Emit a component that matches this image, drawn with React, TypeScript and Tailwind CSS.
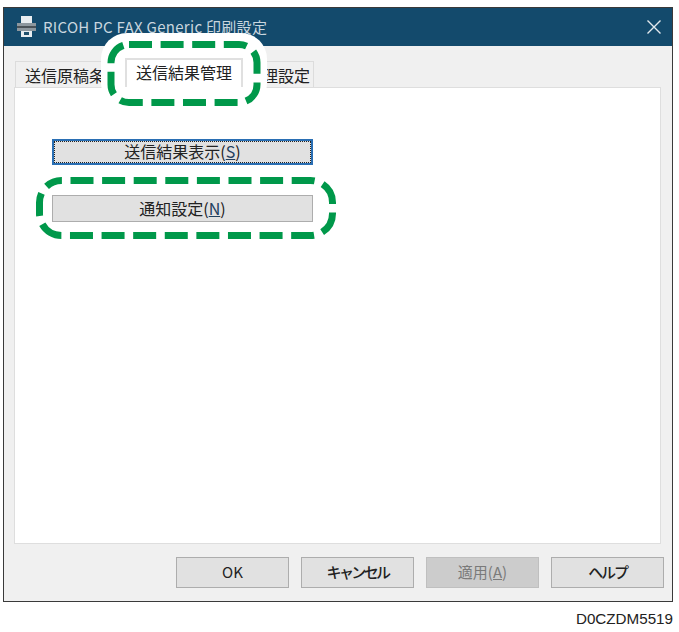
export default function App() {
  const font = { fontFamily: '"Noto Sans CJK JP", "Liberation Sans", sans-serif' };
  return (
    <div className="relative w-[679px] h-[632px] bg-white overflow-hidden" style={font}>
      <div className="ml-[3px] pt-[7px] w-[670px]">
        <div className="h-[595px] border border-[#3a3a3a] bg-[#f0f0f0] flex flex-col">
          <div className="h-[38px] bg-[#134a6c] flex items-center pl-[11px] pr-[10px] text-[#c9d6df] text-[15px]">
            <svg width="22" height="22" viewBox="0 0 22 22" className="mr-[6px]">
              <rect x="6" y="0" width="11" height="7" fill="#e8edf0" />
              <rect x="2" y="7" width="19" height="8" fill="#8d979e" />
              <rect x="2" y="10" width="19" height="2" fill="#4a5258" />
              <rect x="6" y="15" width="11" height="6" fill="#e8edf0" />
              <rect x="9" y="16" width="5" height="3" fill="#20506c" />
            </svg>
            <span className="tracking-[0.3px]">RICOH PC FAX Generic 印刷設定</span>
            <svg width="16" height="16" viewBox="0 0 16 16" className="ml-auto">
              <path d="M1.5 1.5l13 13M14.5 1.5l-13 13" stroke="#e3e9ed" strokeWidth="1.4" fill="none" />
            </svg>
          </div>
          <div className="flex-1 pl-[10px] pr-[11px] flex flex-col">
            <div className="flex items-end h-[41px] pl-px text-[16px] text-[#222]">
              <div className="w-[110px] h-[26px] bg-[#f0f0f0] border border-b-0 border-[#dcdcdc] pl-[9px] leading-[26px] whitespace-nowrap overflow-hidden">送信原稿条件</div>
              <div className="w-[118px] h-[29px] bg-white border-2 border-b-0 border-[#e0e0e0] text-center leading-[24px] relative z-10">送信結果管理</div>
              <div className="w-[72px] h-[26px] -ml-px bg-[#f0f0f0] border border-b-0 border-[#dcdcdc] text-right pr-[3px] leading-[26px] whitespace-nowrap overflow-hidden">理設定</div>
            </div>
            <div className="h-[457px] bg-white border border-[#dedede] pt-[51px] pl-[37px] text-[16px] text-[#222]">
              <button className="block w-[261px] h-[26px] pb-[3px] bg-[#e1e1e1] border-2 border-[#2a6fb4] outline-dotted outline-1 -outline-offset-3 outline-[#222] leading-[20px]">
                送信結果表示(<span className="underline text-[#22405e]">S</span>)
              </button>
              <button className="block mt-[30px] w-[261px] h-[27px] pb-[2px] bg-[#e1e1e1] border border-[#adadad] leading-[22px]">
                通知設定(<span className="underline text-[#22405e]">N</span>)
              </button>
            </div>
            <div className="flex justify-end gap-[12px] mt-[13px] -mr-[3px] text-[15px] text-[#222]">
              <button className="w-[113px] h-[31px] bg-[#e1e1e1] border border-[#adadad]">OK</button>
              <button className="w-[113px] h-[31px] bg-[#e1e1e1] border border-[#adadad] tracking-[-2.6px] font-medium">キャンセル</button>
              <button className="w-[113px] h-[31px] bg-[#cccccc] border border-[#bfbfbf] text-[#7a7a7a]">
                適用(<span className="underline">A</span>)
              </button>
              <button className="w-[113px] h-[31px] bg-[#e1e1e1] border border-[#adadad] tracking-[-2.2px] font-medium">ヘルプ</button>
            </div>
          </div>
        </div>
      </div>
      <div className="absolute right-[6px] top-[611px] text-[15.2px] leading-[16px] text-[#222]" style={{ fontFamily: '"Liberation Sans", sans-serif' }}>
        D0CZDM5519
      </div>
      <div className="absolute left-[101px] top-[33px] w-[166px] h-[76px] rounded-[26px] bg-white z-[5]" />
      <svg width="679" height="632" className="absolute left-0 top-0 z-20 pointer-events-none">
        <rect x="111" y="44.5" width="146" height="58" rx="18" fill="none" stroke="#00984a" strokeWidth="7" strokeDasharray="23 8.6" />
        <rect x="39.5" y="180.5" width="293" height="55" rx="22" fill="none" stroke="#00984a" strokeWidth="7" strokeDasharray="23 8.6" strokeDashoffset="22.6" />
      </svg>
    </div>
  );
}
